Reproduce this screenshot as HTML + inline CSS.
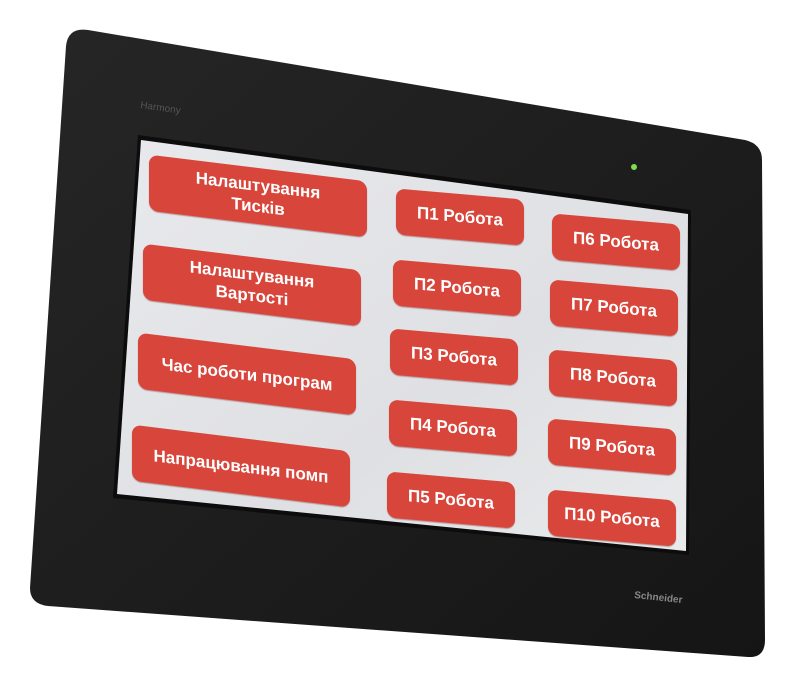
<!DOCTYPE html>
<html><head><meta charset="utf-8"><style>
html,body{margin:0;padding:0;background:#fff;}
body{width:800px;height:682px;position:relative;overflow:hidden;font-family:"Liberation Sans","DejaVu Sans",sans-serif;}
svg{position:absolute;left:0;top:0;}
.b{position:absolute;background:#d8453b;border-radius:9px;color:#fff;font-weight:bold;display:flex;align-items:center;justify-content:center;text-align:center;box-sizing:border-box;box-shadow:0 1px 1px rgba(120,20,20,.4);}
.big{width:218px;height:56px;font-size:17px;line-height:21px;transform:skewY(7deg);}
.sm{width:128px;height:46px;font-size:17px;transform:skewY(5deg);}
</style></head><body>
<svg width="800" height="682" viewBox="0 0 800 682">
  <defs>
    <linearGradient id="bz" x1="0" y1="0" x2="1" y2="1">
      <stop offset="0" stop-color="#262626"/><stop offset="1" stop-color="#151515"/>
    </linearGradient>
    <linearGradient id="sc" x1="0" y1="0" x2="1" y2="1">
      <stop offset="0" stop-color="#e8e9ec"/><stop offset="0.6" stop-color="#dfe0e3"/><stop offset="1" stop-color="#e9eaec"/>
    </linearGradient>
  </defs>
  <path d="M88,30 L745,140 Q762,144 762,160 L765,640 Q765,658 748,657 L48,606 Q30,604 30,588 L66,46 Q68,27 88,30 Z" fill="url(#bz)"/>
  <path d="M138,135 L691,210 L689,555 L113,498 Z" fill="#0c0c0c"/>
  <path d="M141,140 L688,214 L686,551 L117,494 Z" fill="url(#sc)"/>
  <circle cx="634" cy="167" r="3" fill="#7fdc4a"/>
  <text x="140" y="108" font-size="10" fill="#555" transform="rotate(8 140 108)" font-family="Liberation Sans, sans-serif">Harmony</text>
  <text x="634" y="598" font-size="10" fill="#888" font-weight="bold" transform="rotate(6 634 598)" font-family="Liberation Sans, sans-serif">Schneider</text>
</svg>
<div class="b big" style="left:149px;top:168px;">Налаштування<br>Тисків</div>
<div class="b big" style="left:143px;top:257px;">Налаштування<br>Вартості</div>
<div class="b big" style="left:138px;top:346px;">Час роботи програм</div>
<div class="b big" style="left:132px;top:438px;">Напрацювання помп</div>
<div class="b sm" style="left:396px;top:194px;">П1 Робота</div>
<div class="b sm" style="left:393px;top:265px;">П2 Робота</div>
<div class="b sm" style="left:390px;top:334px;">П3 Робота</div>
<div class="b sm" style="left:389px;top:405px;">П4 Робота</div>
<div class="b sm" style="left:387px;top:477px;">П5 Робота</div>
<div class="b sm" style="left:552px;top:219px;">П6 Робота</div>
<div class="b sm" style="left:550px;top:285px;">П7 Робота</div>
<div class="b sm" style="left:549px;top:355px;">П8 Робота</div>
<div class="b sm" style="left:548px;top:424px;">П9 Робота</div>
<div class="b sm" style="left:548px;top:495px;">П10 Робота</div>
</body></html>
